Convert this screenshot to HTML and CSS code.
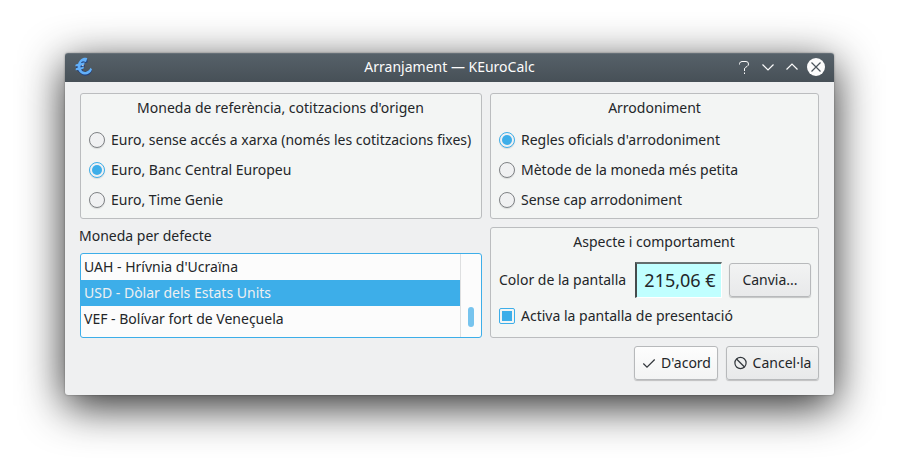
FILE: index.html
```html
<!DOCTYPE html>
<html lang="ca">
<head>
<meta charset="utf-8">
<title>Arranjament — KEuroCalc</title>
<link rel="stylesheet" href="styles.css">
</head>
<body>
<main class="window">
  <header class="titlebar">
    <svg class="app-icon" width="18" height="20" viewBox="0 0 18 20">
      <path d="M12.500 2.500C9 .5 5 2.500 3.800 6L1 9.200L2 13.500L5 16C9 21 15.500 18.500 17 13.500L15.500 11.500L13 14L9 15L7 12L10 9L9 6L12.500 5.500Z" fill="#24417a"/>
      <path d="M12.300 1.200L11 5L8 4.300Q6.200 4.700 5.800 6.300L9.600 5.200L9.300 7.600L5.500 8.700V10.400L9 9.400L8.600 11.600L6 12.500Q7.400 15.300 10.600 14.900Q14 14.300 15.600 10.800L17 12.500C15.300 17.500 9.500 18.700 6 16.300Q4.100 15 3.200 13L.6 13.200L.9 11.200L2.700 10.800V9.200L.2 9.300L.7 7.400L3.100 6.800C4.400 2.500 8.500-.5 12.300 1.200Z" fill="#62b0fa"/>
      <path d="M6.500 8.200L9.300 7.600L8 9.500Z" fill="#c8d2dc"/>
    </svg>
    <h1 class="title">Arranjament — KEuroCalc</h1>
    <div class="controls">
      <svg width="18" height="18" viewBox="0 0 18 18" fill="none" stroke="#fcfcfc"><path d="M4.500 6.500V5.500Q5 3.500 7 3.500H11Q13.500 3.500 13.500 6Q13.500 7.500 12 8.500L10.500 9.400Q9.500 10 9.500 11V13M9.500 14.500V16"/></svg>
      <svg width="18" height="18" viewBox="0 0 18 18" fill="none" stroke="#fcfcfc" stroke-width="1.200"><path d="M3.500 6.500L9 12L14.500 6.500"/></svg>
      <svg width="18" height="18" viewBox="0 0 18 18" fill="none" stroke="#fcfcfc" stroke-width="1.200"><path d="M3.500 11.500L9 6L14.500 11.500"/></svg>
      <svg width="18" height="18" viewBox="0 0 18 18" fill="none"><circle cx="9" cy="9" r="9" fill="#fcfcfc"/><path d="M4.500 4.500L13.500 13.500M13.500 4.500L4.500 13.500" stroke="#4b545c" stroke-width="1.200"/></svg>
    </div>
  </header>
  <div class="content">
    <div class="columns">
      <div class="column column-left">
        <section class="group">
          <h2 class="group-title">Moneda de referència, cotitzacions d'origen</h2>
          <label class="option"><span class="radio"></span><span>Euro, sense accés a xarxa (només les cotitzacions fixes)</span></label>
          <label class="option"><span class="radio selected"></span><span>Euro, Banc Central Europeu</span></label>
          <label class="option"><span class="radio"></span><span>Euro, Time Genie</span></label>
        </section>
        <div class="list-label">Moneda per defecte</div>
        <div class="list">
          <div class="items">
            <div class="item">UAH - Hrívnia d'Ucraïna</div>
            <div class="item current">USD - Dòlar dels Estats Units</div>
            <div class="item">VEF - Bolívar fort de Veneçuela</div>
          </div>
          <div class="scrollbar"><div class="thumb"></div></div>
        </div>
      </div>
      <div class="column column-right">
        <section class="group">
          <h2 class="group-title rounding-title">Arrodoniment</h2>
          <label class="option"><span class="radio selected"></span><span>Regles oficials d'arrodoniment</span></label>
          <label class="option"><span class="radio"></span><span>Mètode de la moneda més petita</span></label>
          <label class="option"><span class="radio"></span><span>Sense cap arrodoniment</span></label>
        </section>
        <section class="group appearance">
          <h2 class="group-title">Aspecte i comportament</h2>
          <div class="color-row">
            <span class="color-label">Color de la pantalla</span>
            <span class="display">215,06 €</span>
            <button class="button change">Canvia...</button>
          </div>
          <label class="option splash"><span class="check"></span><span>Activa la pantalla de presentació</span></label>
        </section>
      </div>
    </div>
    <footer class="actions">
      <button class="button ok"><svg width="16" height="16" viewBox="0 0 16 16" fill="none" stroke="#31363b" stroke-width="1.200"><path d="M2.300 8.500L6 12.200L13.700 4.500"/></svg>D'acord</button>
      <button class="button cancel"><svg width="16" height="16" viewBox="0 0 16 16" fill="none" stroke="#31363b" stroke-width="1.200"><circle cx="7.500" cy="8" r="5.600"/><path d="M3.500 4L11.500 12"/></svg><span lang="en">Cancel·la</span></button>
    </footer>
  </div>
</main>
</body>
</html>
```
FILE: styles.css
```css
* { box-sizing: border-box; }
body {
  margin: 0;
  padding: 53px 65px;
  height: 472px;
  overflow: hidden;
  background: #fff;
  color: #232629;
  font: 14px/20px "Noto Sans", sans-serif;
  white-space: nowrap;
}
h1, h2 { margin: 0; font-size: inherit; font-weight: 400; }
svg { display: block; flex: none; }
.window {
  height: 342px;
  border-radius: 3px;
  background: #eff0f1;
  box-shadow: 0 11px 44px rgba(0, 0, 0, .85), 0 0 2px rgba(0, 0, 0, .4);
}
.titlebar {
  display: grid;
  grid-template-columns: 90px 1fr 90px;
  align-items: center;
  height: 29px;
  padding: 0 9px 0 10px;
  border-radius: 3px 3px 0 0;
  background: linear-gradient(#566169, #475057);
  border-top: 1px solid #667078;
  color: #fcfcfc;
}
.title { padding: 0 1px 2px 0; text-align: center; }
.app-icon { margin-top: -2px; }
.controls { display: flex; gap: 6px; justify-content: flex-end; margin-top: -2px; }
.content { padding: 11px 15px 15px; }
.columns { display: flex; gap: 8px; }
.column-left { width: 402px; }
.column-right { width: 329px; }
.group {
  height: 126px;
  padding: 4px 8px 0;
  border: 1px solid #bbbdbf;
  border-radius: 3px;
  background: #f3f5f4;
}
.group-title { height: 27px; padding-right: 1px; text-align: center; }
.rounding-title { padding-right: 0; }
.option { display: flex; align-items: center; gap: 6px; height: 30px; }
.radio {
  display: grid;
  place-items: center;
  width: 16px;
  height: 16px;
  border: 1px solid #7f8285;
  border-radius: 50%;
  background: #f0f1f2;
  box-shadow: 0 1px 1px rgba(0, 0, 0, .1);
}
.radio.selected { border-color: #3daee9; }
.radio.selected::after { content: ""; width: 10px; height: 10px; border-radius: 50%; background: #3daee9; }
.list-label { margin: 7px 0 7px -1px; }
.list {
  display: flex;
  height: 85px;
  border: 1px solid #3daee9;
  border-radius: 3px;
  background: #fcfcfc;
  overflow: hidden;
}
.items { flex: 1; }
.item { height: 26px; padding: 3px; }
.item.current { background: #3daee9; color: #eff0f1; }
.scrollbar { width: 21px; padding: 53px 0 0 7px; border-left: 1px solid #dedfe0; }
.thumb { width: 6px; height: 20px; border-radius: 3px; background: #77c4ee; }
.appearance { height: 111px; margin-top: 8px; padding-right: 7px; }
.appearance .group-title { height: 30px; padding-right: 2px; }
.color-row { display: flex; align-items: center; height: 35px; }
.color-row > * { flex: none; }
.color-label { width: 136px; }
.display {
  width: 87px;
  height: 36px;
  margin-right: 7px;
  border: 2px solid #fff;
  border-width: 2px 1px 1px 2px;
  border-top-color: #626d6d;
  border-left-color: #454c4c;
  background: #c0ffff;
  padding-left: 2px;
  font-size: 18px;
  line-height: 33px;
  text-align: center;
}
.button {
  display: flex;
  align-items: center;
  justify-content: center;
  gap: 4px;
  height: 34px;
  padding: 0;
  border: 1px solid #b7b9bb;
  border-radius: 3px;
  background: linear-gradient(#f2f3f3, #e8e9ea);
  box-shadow: 0 1px 1px rgba(0, 0, 0, .2);
  color: inherit;
  font: inherit;
}
.change { width: 82px; }
.splash { margin-top: 4px; }
.check { width: 16px; height: 16px; padding: 2px; border: 1px solid #3daee9; border-radius: 2px; background: #3daee9 content-box; }
.actions { display: flex; justify-content: flex-end; gap: 8px; margin-top: 8px; }
.ok { width: 84px; background: linear-gradient(#fdfdfd, #f3f4f4); }
.cancel { width: 93px; padding-right: 1px; }
```
